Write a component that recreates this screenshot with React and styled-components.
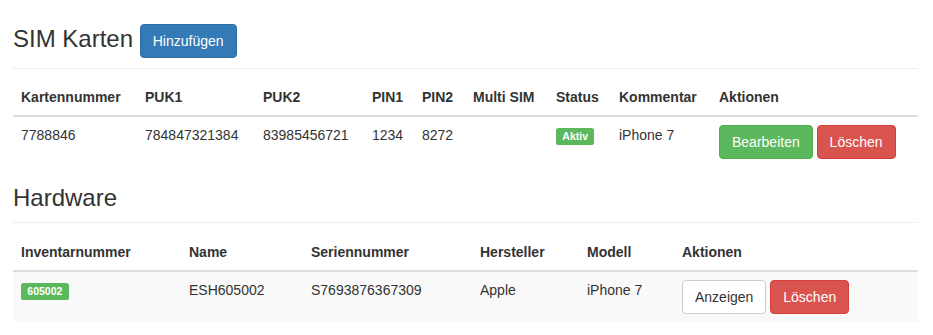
import React from "react";
import styled, { createGlobalStyle, css } from "styled-components";

const GlobalStyle = createGlobalStyle`
  html, body { margin: 0; padding: 0; background: #fff; }
  body {
    font-family: "Liberation Sans", Arial, Helvetica, sans-serif;
    font-size: 14px;
    line-height: 1.42857143;
    color: #333;
  }
  * { box-sizing: border-box; }
`;

const Page = styled.div`
  padding: 0 15px 0 13px;
`;

const Heading = styled.h3`
  font-family: "Liberation Sans", Arial, Helvetica, sans-serif;
  font-size: 24px;
  font-weight: 500;
  line-height: 1.1;
  color: #333;
  margin: ${(p) => (p.$first ? "24px" : "18px")} 0 0 0;
`;

const Rule = styled.hr`
  border: 0;
  border-top: 1px solid #eee;
  height: 0;
  margin: ${(p) => (p.$first ? "10px 0 10px" : "10.5px 0 11px")};
`;

const variants = {
  primary: css`
    color: #fff;
    background: #337ab7;
    border-color: #2e6da4;
  `,
  success: css`
    color: #fff;
    background: #5cb85c;
    border-color: #4cae4c;
  `,
  danger: css`
    color: #fff;
    background: #d9534f;
    border-color: #d43f3a;
  `,
  default: css`
    color: #333;
    background: #fff;
    border-color: #ccc;
  `,
};

const Button = styled.button`
  display: inline-block;
  font-family: "Liberation Sans", Arial, Helvetica, sans-serif;
  font-size: 14px;
  font-weight: 400;
  line-height: 1.42857143;
  padding: 6px 12px;
  border: 1px solid transparent;
  border-radius: 4px;
  vertical-align: middle;
  white-space: nowrap;
  cursor: pointer;
  margin: 0;
  ${(p) => variants[p.$variant || "default"]}
`;

const Label = styled.span`
  display: inline;
  padding: 0.2em 0.6em 0.3em;
  font-size: 75%;
  font-weight: 700;
  line-height: 1;
  color: #fff;
  background: #5cb85c;
  border-radius: 0.25em;
  white-space: nowrap;
  vertical-align: baseline;
  text-align: center;
`;

const Table = styled.table`
  width: 100%;
  max-width: 100%;
  border-collapse: collapse;
  border-spacing: 0;
  margin: 0;
  table-layout: fixed;
`;

const HeadCell = styled.th`
  width: ${(p) => p.$w}px;
  text-align: left;
  font-weight: 700;
  padding: 8px;
  line-height: 1.42857143;
  vertical-align: bottom;
  border-bottom: 2px solid #ddd;
  white-space: nowrap;
`;

const Row = styled.tr`
  background: ${(p) => (p.$striped ? "#f9f9f9" : "transparent")};
`;

const Cell = styled.td`
  padding: 8px;
  line-height: 1.42857143;
  vertical-align: top;
  white-space: nowrap;
`;

const Actions = styled(Cell)`
  font-size: 14px;
`;

const simCols = [
  ["Kartennummer", 124],
  ["PUK1", 118],
  ["PUK2", 109],
  ["PIN1", 50],
  ["PIN2", 51],
  ["Multi SIM", 83],
  ["Status", 63],
  ["Kommentar", 100],
  ["Aktionen", 207],
];

const hwCols = [
  ["Inventarnummer", 168],
  ["Name", 122],
  ["Seriennummer", 169],
  ["Hersteller", 107],
  ["Modell", 95],
  ["Aktionen", 244],
];

export default function App() {
  return (
    <>
      <GlobalStyle />
      <Page>
        <Heading $first>
          SIM Karten <Button $variant="primary">Hinzufügen</Button>
        </Heading>
        <Rule $first />
        <Table>
          <thead>
            <tr>
              {simCols.map(([t, w]) => (
                <HeadCell key={t} $w={w}>
                  {t}
                </HeadCell>
              ))}
            </tr>
          </thead>
          <tbody>
            <Row>
              <Cell>7788846</Cell>
              <Cell>784847321384</Cell>
              <Cell>83985456721</Cell>
              <Cell>1234</Cell>
              <Cell>8272</Cell>
              <Cell></Cell>
              <Cell>
                <Label>Aktiv</Label>
              </Cell>
              <Cell>iPhone 7</Cell>
              <Actions>
                <Button $variant="success">Bearbeiten</Button>{" "}
                <Button $variant="danger">Löschen</Button>
              </Actions>
            </Row>
          </tbody>
        </Table>

        <Heading>Hardware</Heading>
        <Rule />
        <Table>
          <thead>
            <tr>
              {hwCols.map(([t, w]) => (
                <HeadCell key={t} $w={w}>
                  {t}
                </HeadCell>
              ))}
            </tr>
          </thead>
          <tbody>
            <Row $striped>
              <Cell>
                <Label>605002</Label>
              </Cell>
              <Cell>ESH605002</Cell>
              <Cell>S7693876367309</Cell>
              <Cell>Apple</Cell>
              <Cell>iPhone 7</Cell>
              <Actions>
                <Button $variant="default">Anzeigen</Button>{" "}
                <Button $variant="danger">Löschen</Button>
              </Actions>
            </Row>
          </tbody>
        </Table>
      </Page>
    </>
  );
}
